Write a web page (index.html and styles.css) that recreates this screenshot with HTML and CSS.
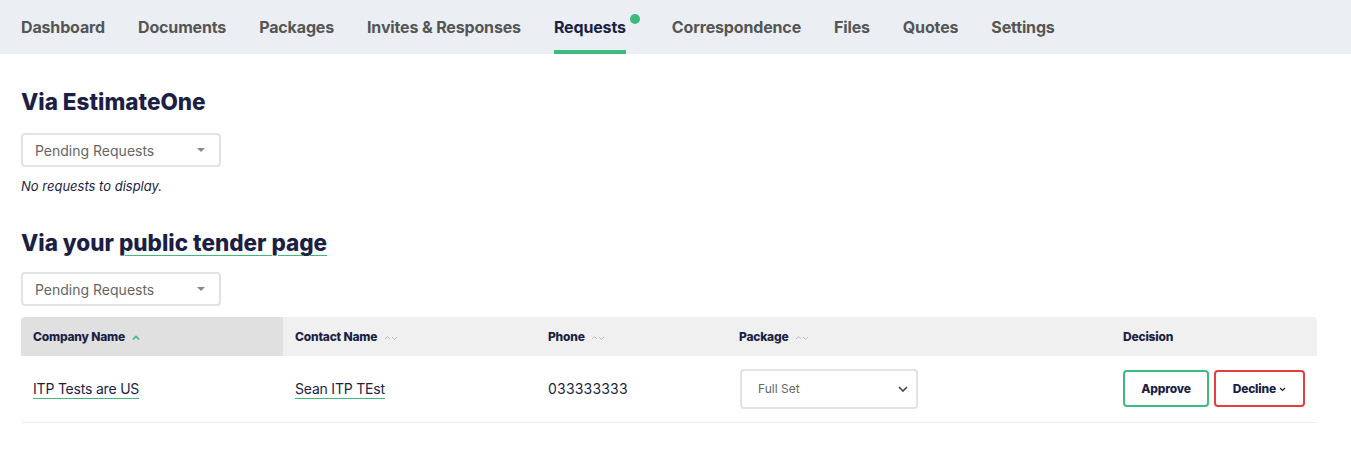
FILE: index.html
```html
<!DOCTYPE html>
<html>
<head>
<meta charset="utf-8">
<link rel="stylesheet" href="styles.css">
</head>
<body>
<nav class="nav">
  <a class="nav-item">Dashboard</a>
  <a class="nav-item">Documents</a>
  <a class="nav-item">Packages</a>
  <a class="nav-item">Invites &amp; Responses</a>
  <a class="nav-item active">Requests<span class="dot"></span></a>
  <a class="nav-item">Correspondence</a>
  <a class="nav-item">Files</a>
  <a class="nav-item">Quotes</a>
  <a class="nav-item">Settings</a>
</nav>
<main class="content">
  <h2 class="heading first">Via EstimateOne</h2>
  <div class="filter"><span>Pending Requests</span><span class="caret"></span></div>
  <p class="empty">No requests to display.</p>

  <h2 class="heading second">Via your <a class="heading-link">public tender page</a></h2>
  <div class="filter"><span>Pending Requests</span><span class="caret"></span></div>

  <table class="table">
    <thead>
      <tr>
        <th class="c1 sorted">Company Name <svg class="sort" width="10" height="8" viewBox="0 0 10 8"><path d="M2 5.5 L5 2.5 L8 5.5" fill="none" stroke="#3dba7e" stroke-width="1.6"/></svg></th>
        <th class="c2">Contact Name <svg class="sort" width="14" height="8" viewBox="0 0 14 8"><path d="M1 5 L3.5 2.5 L6 5 M8 3 L10.5 5.5 L13 3" fill="none" stroke="#bbb" stroke-width="1"/></svg></th>
        <th class="c3">Phone <svg class="sort" width="14" height="8" viewBox="0 0 14 8"><path d="M1 5 L3.5 2.5 L6 5 M8 3 L10.5 5.5 L13 3" fill="none" stroke="#bbb" stroke-width="1"/></svg></th>
        <th class="c4">Package <svg class="sort" width="14" height="8" viewBox="0 0 14 8"><path d="M1 5 L3.5 2.5 L6 5 M8 3 L10.5 5.5 L13 3" fill="none" stroke="#bbb" stroke-width="1"/></svg></th>
        <th class="c5">Decision</th>
      </tr>
    </thead>
    <tbody>
      <tr>
        <td><a class="link">ITP Tests are US</a></td>
        <td><a class="link">Sean ITP TEst</a></td>
        <td class="phone">033333333</td>
        <td><div class="pkg"><span>Full Set</span><svg width="10" height="6" viewBox="0 0 10 6"><path d="M1 1 L5 5 L9 1" fill="none" stroke="#444" stroke-width="1.6"/></svg></div></td>
        <td><div class="actions"><button class="btn approve">Approve</button><button class="btn decline">Decline <svg width="7" height="5" viewBox="0 0 7 5"><path d="M1 1 L3.5 3.5 L6 1" fill="none" stroke="#1b1f45" stroke-width="1.2"/></svg></button></div></td>
      </tr>
    </tbody>
  </table>
</main>
</body>
</html>
```
FILE: styles.css
```css
* { box-sizing: border-box; }
body {
  margin: 0;
  font-family: Inter, "Liberation Sans", sans-serif;
  color: #1b1f45;
  background: #fff;
}
.nav {
  display: flex;
  gap: 33px;
  height: 54px;
  background: #ebeff3;
  padding: 0 21px;
}
.nav-item {
  position: relative;
  display: flex;
  align-items: center;
  font-size: 16px;
  font-weight: 700;
  color: #555;
  letter-spacing: -0.15px;
  border-bottom: 4px solid transparent;
  padding-top: 4px;
}
.nav-item.active {
  color: #1b1f45;
  border-bottom-color: #3dba7e;
  margin-right: 13px;
}
.dot {
  position: absolute;
  right: -14px;
  top: 14px;
  width: 10px;
  height: 10px;
  border-radius: 50%;
  background: #3dba7e;
}
.content {
  padding: 0 34px 0 21px;
}
.heading {
  font-size: 22.5px;
  font-weight: 800;
  margin: 0;
  line-height: 28px;
}
.heading.first { margin-top: 34px; }
.heading.second { margin-top: 35px; }
.heading-link {
  text-decoration: underline;
  text-decoration-color: #3dba7e;
  text-underline-offset: 4px;
  text-decoration-thickness: 1px;
}
.filter {
  width: 200px;
  height: 34px;
  border: 2px solid #e2e2e2;
  border-radius: 4px;
  display: flex;
  align-items: center;
  justify-content: space-between;
  padding: 0 14px 0 12px;
  font-size: 14px;
  color: #666;
  margin-top: 17px;
}
.heading.second + .filter { margin-top: 15px; }
.caret {
  width: 0;
  height: 0;
  border-left: 4px solid transparent;
  border-right: 4px solid transparent;
  border-top: 4px solid #888;
}
.empty {
  font-style: italic;
  font-size: 13px;
  margin: 11px 0 0;
  line-height: 16px;
}
.table {
  width: 1296px;
  border-collapse: collapse;
  margin-top: 11px;
}
.table th {
  background: #f0f0f0;
  height: 39px;
  text-align: left;
  font-size: 12px;
  font-weight: 800;
  padding: 0 12px;
  letter-spacing: -0.2px;
}
.table th.sorted { background: #e0e0e0; border-radius: 4px 0 0 0; }
.table th.c5 { border-radius: 0 4px 0 0; padding-left: 0; }
.c1 { width: 262px; }
.c2 { width: 253px; }
.c3 { width: 191px; }
.c4 { width: 396px; }
.c5 { width: 194px; }
.sort { margin-left: 4px; vertical-align: middle; }
.table td {
  height: 66px;
  padding: 0 12px;
  font-size: 14px;
  border-bottom: 1px solid #eee;
}
.table td:last-child { padding: 0; }
.link {
  text-decoration: underline;
  text-decoration-color: #3dba7e;
  text-underline-offset: 4px;
  letter-spacing: -0.2px;
}
.phone { letter-spacing: 0.2px; }
.pkg {
  width: 178px;
  height: 40px;
  border: 2px solid #e2e2e2;
  border-radius: 4px;
  display: flex;
  align-items: center;
  justify-content: space-between;
  padding: 0 8px 0 16px;
  font-size: 12px;
  color: #666;
  margin-left: 1px;
}
.actions {
  display: flex;
  gap: 5px;
}
.btn {
  font-family: inherit;
  font-size: 12px;
  font-weight: 800;
  color: #1b1f45;
  background: #fff;
  height: 37px;
  border-radius: 4px;
  padding: 0;
  letter-spacing: -0.2px;
}
.approve { width: 86px; border: 2px solid #3dba7e; }
.decline { width: 91px; border: 2px solid #e53e3e; }
.decline svg { vertical-align: middle; margin-left: 1px; }
```
